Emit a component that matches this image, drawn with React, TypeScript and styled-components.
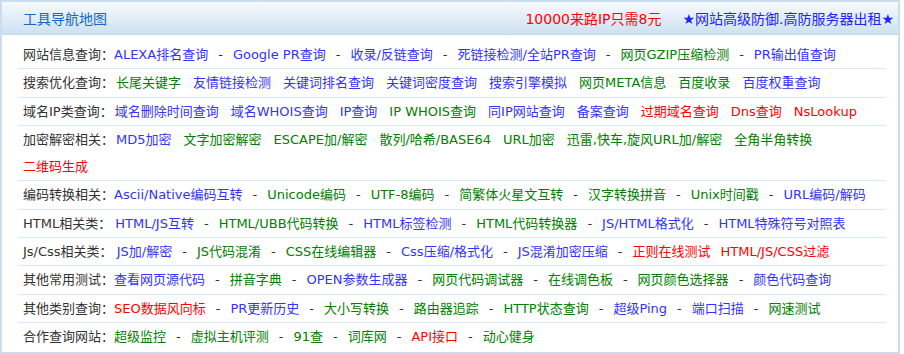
import styled, { createGlobalStyle } from 'styled-components';

type Tone = 'blue' | 'green' | 'red';

type ToolLink = {
  /** 链接文字 */
  text: string;
  /** 文字颜色 */
  tone: Tone;
  /** 前面是否有 "-" 分隔 */
  dash?: boolean;
};

type ToolRow = {
  label: string;
  /** 是否整行用 "-" 分隔 */
  dashed: boolean;
  links: ToolLink[];
};

const toneColor: Record<Tone, string> = {
  blue: '#3333ff',
  green: '#008000',
  red: '#ff0000',
};

const b = (text: string): ToolLink => ({ text, tone: 'blue' });
const g = (text: string): ToolLink => ({ text, tone: 'green' });
const r = (text: string): ToolLink => ({ text, tone: 'red' });

const rows: ToolRow[] = [
  {
    label: '网站信息查询：',
    dashed: true,
    links: [b('ALEXA排名查询'), b('Google PR查询'), b('收录/反链查询'), b('死链接检测/全站PR查询'), g('网页GZIP压缩检测'), b('PR输出值查询')],
  },
  {
    label: '搜索优化查询：',
    dashed: false,
    links: [g('长尾关键字'), b('友情链接检测'), b('关键词排名查询'), b('关键词密度查询'), b('搜索引擎模拟'), g('网页META信息'), g('百度收录'), b('百度权重查询')],
  },
  {
    label: '域名IP类查询：',
    dashed: false,
    links: [b('域名删除时间查询'), b('域名WHOIS查询'), b('IP查询'), g('IP WHOIS查询'), b('同IP网站查询'), b('备案查询'), r('过期域名查询'), r('Dns查询'), r('NsLookup')],
  },
  {
    label: '加密解密相关：',
    dashed: false,
    links: [b('MD5加密'), g('文字加密解密'), g('ESCAPE加/解密'), g('散列/哈希/BASE64'), g('URL加密'), g('迅雷,快车,旋风URL加/解密'), g('全角半角转换'), r('二维码生成')],
  },
  {
    label: '编码转换相关：',
    dashed: true,
    links: [b('Ascii/Native编码互转'), g('Unicode编码'), g('UTF-8编码'), g('简繁体火星文互转'), g('汉字转换拼音'), g('Unix时间戳'), b('URL编码/解码')],
  },
  {
    label: 'HTML相关类： ',
    dashed: true,
    links: [b('HTML/JS互转'), g('HTML/UBB代码转换'), b('HTML标签检测'), g('HTML代码转换器'), b('JS/HTML格式化'), b('HTML特殊符号对照表')],
  },
  {
    label: 'Js/Css相关类： ',
    dashed: true,
    links: [b('JS加/解密'), g('JS代码混淆'), g('CSS在线编辑器'), b('Css压缩/格式化'), b('JS混淆加密压缩'), r('正则在线测试'), { ...r('HTML/JS/CSS过滤'), dash: false }],
  },
  {
    label: '其他常用测试：',
    dashed: true,
    links: [b('查看网页源代码'), g('拼音字典'), b('OPEN参数生成器'), g('网页代码调试器'), g('在线调色板'), g('网页颜色选择器'), b('颜色代码查询')],
  },
  {
    label: '其他类别查询：',
    dashed: true,
    links: [r('SEO数据风向标'), b('PR更新历史'), g('大小写转换'), g('路由器追踪'), g('HTTP状态查询'), b('超级Ping'), b('端口扫描'), g('网速测试')],
  },
  {
    label: '合作查询网站：',
    dashed: true,
    links: [g('超级监控'), g('虚拟主机评测'), g('91查'), g('词库网'), r('API接口'), g('动心健身')],
  },
];

const GlobalStyle = createGlobalStyle`
  body {
    margin: 0;
    background: #ffffff;
    font-family: "DejaVu Sans", "Noto Sans CJK SC", sans-serif;
  }
`;

// 外框
const Panel = styled.div`
  width: 900px;
  box-sizing: border-box;
  border: 2px solid #c9ddef;
  background: #ffffff;
`;

// 标题栏
const Header = styled.div`
  height: 32px;
  display: flex;
  align-items: center;
  padding: 0 4px 0 21px;
  background: linear-gradient(to bottom, #f6fafd, #cde1f1);
  border-bottom: 1px solid #c2d9ed;
  font-size: 14px;
`;

const Title = styled.span`
  color: #1666c5;
  flex: 1;
`;

const Promo = styled.span<{ $tone: Tone }>`
  color: ${(p) => (p.$tone === 'red' ? '#ff0000' : '#2222ff')};
  margin-left: 21px;
`;

// 内容区
const Body = styled.div`
  padding: 6px 12px 2px 16px;
`;

const Row = styled.div<{ $gap: number }>`
  display: flex;
  flex-wrap: wrap;
  align-items: center;
  column-gap: ${(p) => p.$gap}px;
  padding-left: 5px;
  line-height: 27.3px;
  font-size: 13px;
  border-bottom: 1px solid #d9e7f4;

  &:last-child {
    border-bottom: none;
  }
`;

// 行标题，紧贴第一个链接
const Label = styled.span`
  color: #333333;
  white-space: pre;
  margin-right: -10px;
`;

const Link = styled.a<{ $tone: Tone }>`
  color: ${(p) => toneColor[p.$tone]};
  text-decoration: none;
  white-space: nowrap;
  cursor: pointer;
`;

const Dash = styled.span`
  color: #333333;
`;

function ToolMap() {
  return (
    <Panel>
      <Header>
        <Title>工具导航地图</Title>
        <Promo $tone="red">10000来路IP只需8元</Promo>
        <Promo $tone="blue">★网站高级防御.高防服务器出租★</Promo>
      </Header>
      <Body>
        {rows.map((row) => (
          <Row key={row.label} $gap={row.dashed ? 10 : 12}>
            <Label>{row.label}</Label>
            {row.links.map((link, i) => {
              const dash = i > 0 && (link.dash ?? row.dashed);
              return [
                dash ? <Dash key={`d${i}`}>-</Dash> : null,
                <Link key={link.text} $tone={link.tone}>
                  {link.text}
                </Link>,
              ];
            })}
          </Row>
        ))}
      </Body>
    </Panel>
  );
}

export default function App() {
  return (
    <>
      <GlobalStyle />
      <ToolMap />
    </>
  );
}
